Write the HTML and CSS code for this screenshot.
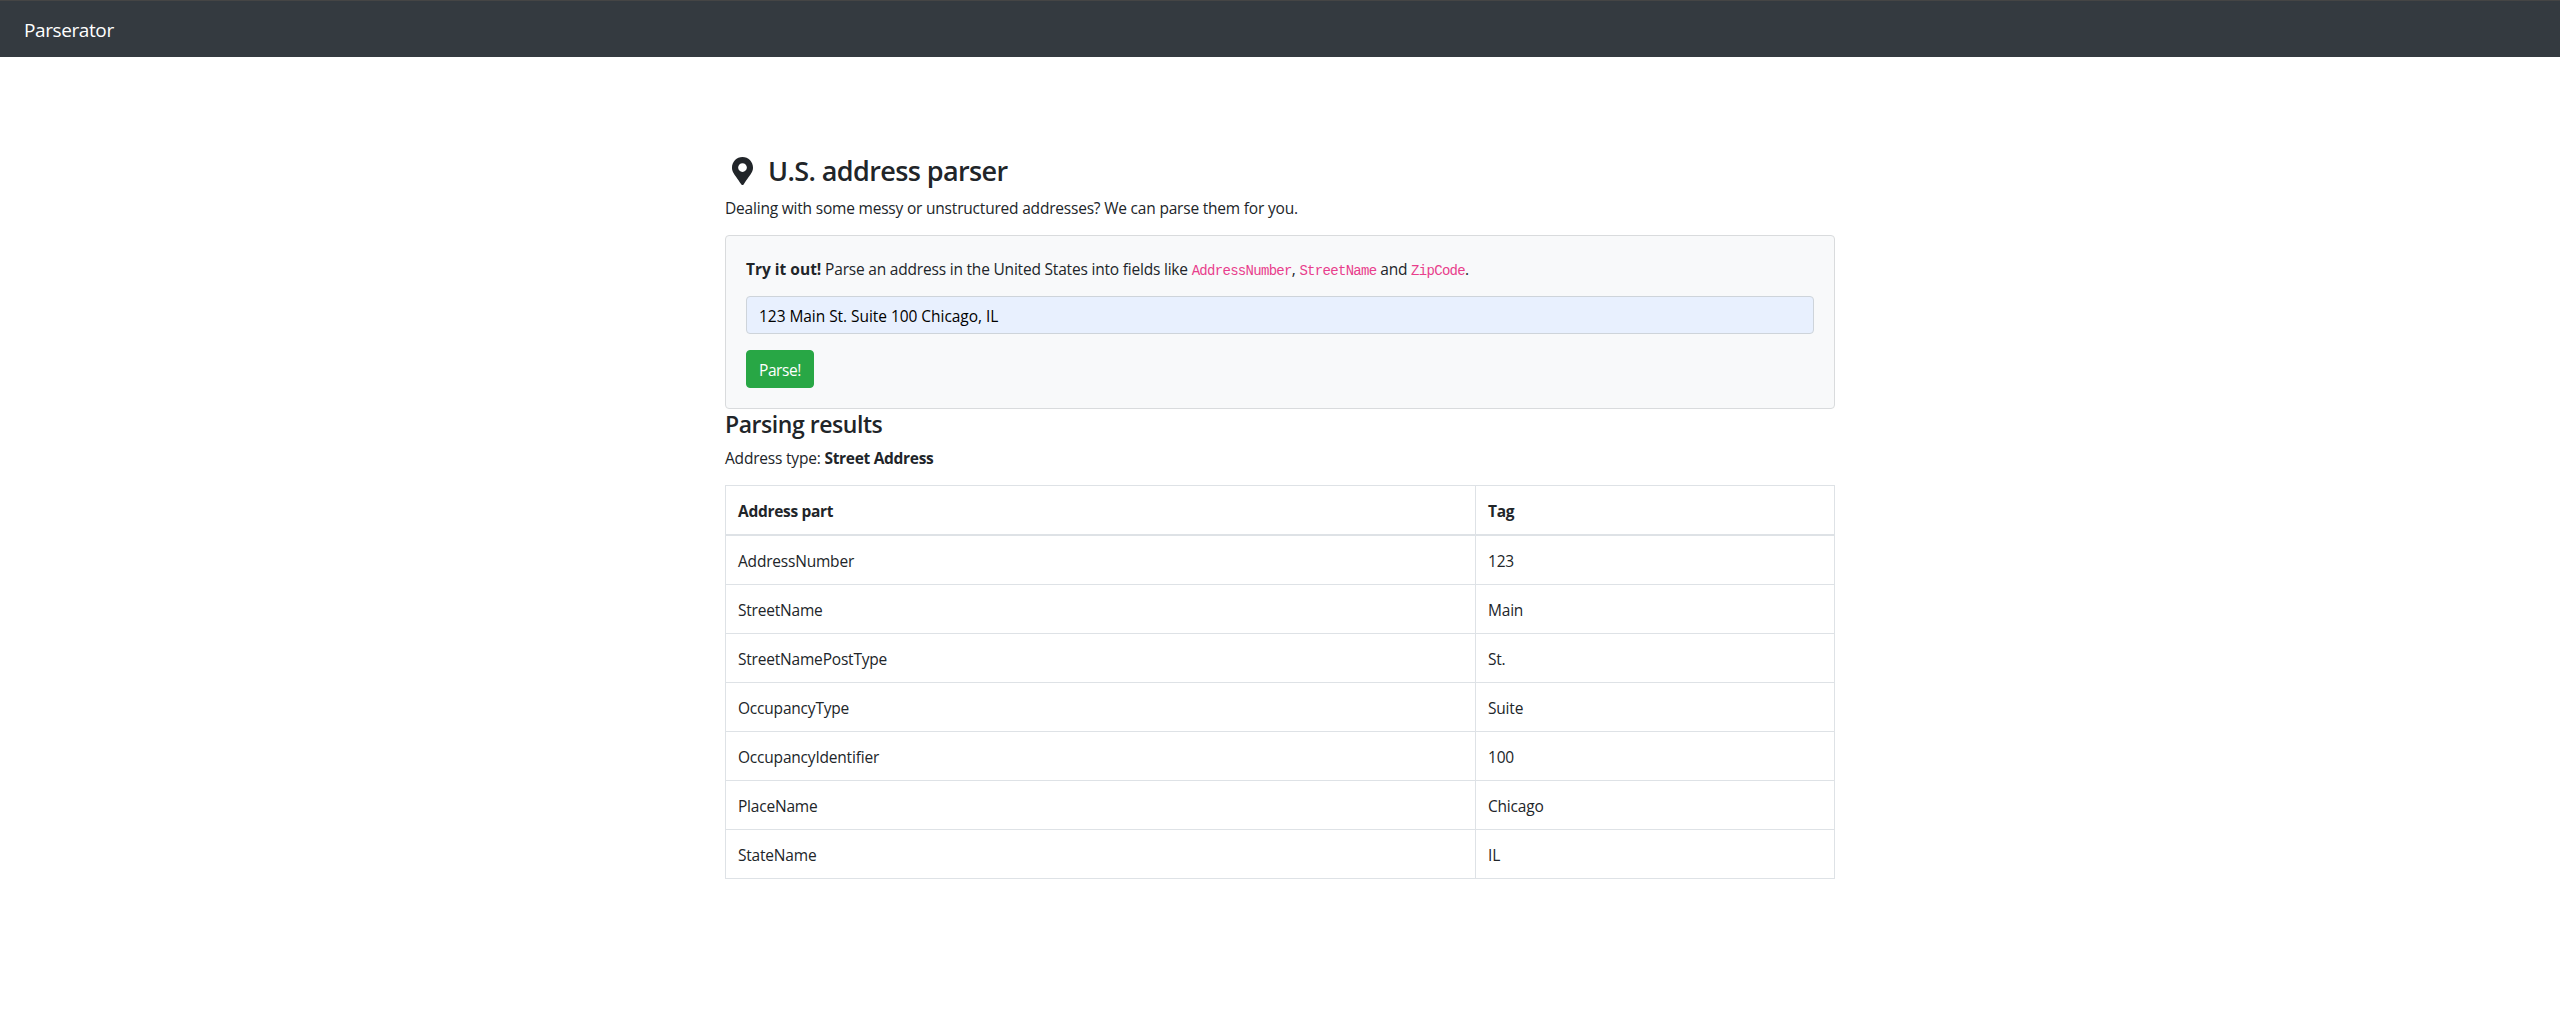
FILE: index.html
```html
<!DOCTYPE html>
<html lang="en">
<head>
  <meta charset="utf-8">
  <title>Parserator</title>
  <link rel="stylesheet" href="styles.css">
</head>
<body>
  <nav class="navbar"><a class="navbar-brand">Parserator</a></nav>
  <main class="container">
    <h3 class="title">
      <svg class="title-icon" viewBox="0 0 384 512" aria-hidden="true"><path fill="currentColor" d="M172.268 501.67C26.97 291.031 0 269.413 0 192 0 85.961 85.961 0 192 0s192 85.961 192 192c0 77.413-26.97 99.031-172.268 309.67-9.535 13.774-29.93 13.773-39.464 0zM192 272c44.183 0 80-35.817 80-80s-35.817-80-80-80-80 35.817-80 80 35.817 80 80 80z"/></svg>
      <span class="title-text">U.S. address parser</span>
    </h3>
    <p class="lead">Dealing with some messy or unstructured addresses? We can parse them for you.</p>
    <form class="card">
      <p class="hint"><strong class="try">Try it out!</strong> Parse an address in the United States into fields like <code>AddressNumber</code>, <code>StreetName</code> and <code>ZipCode</code>.</p>
      <input class="form-control" type="text" value="123 Main St. Suite 100 Chicago, IL">
      <button class="btn" type="button">Parse!</button>
    </form>
    <section class="results">
      <h4 class="subtitle">Parsing results</h4>
      <p class="address-type">Address type: <strong>Street Address</strong></p>
      <table class="table">
        <thead><tr><th class="col-part">Address part</th><th>Tag</th></tr></thead>
        <tbody>
          <tr><td>AddressNumber</td><td>123</td></tr>
          <tr><td>StreetName</td><td>Main</td></tr>
          <tr><td>StreetNamePostType</td><td>St.</td></tr>
          <tr><td>OccupancyType</td><td>Suite</td></tr>
          <tr><td>OccupancyIdentifier</td><td>100</td></tr>
          <tr><td>PlaceName</td><td>Chicago</td></tr>
          <tr><td>StateName</td><td>IL</td></tr>
        </tbody>
      </table>
    </section>
  </main>
</body>
</html>
```
FILE: styles.css
```css
*, *::before, *::after { box-sizing: border-box; }
body {
  margin: 0;
  background: #fff;
  color: #212529;
  font: 400 15.5px/24px "Open Sans", "Noto Sans", sans-serif;
  letter-spacing: -0.2px;
}
h3, h4, p { margin: 0; }
strong, th { font-weight: 700; letter-spacing: -0.3px; }
.try { letter-spacing: 0; }
.navbar {
  display: flex;
  align-items: center;
  height: 57px;
  padding: 1px 24px 0;
  border-top: 1px solid #454545;
  background: #343a40;
}
.navbar-brand { color: #fff; font-size: 19px; line-height: 30px; letter-spacing: -0.4px; }
.container { width: 1110px; margin: 97px auto 0; }
.title {
  display: flex;
  align-items: center;
  gap: 8px;
  height: 34px;
  margin-bottom: 8px;
  font-size: 27px;
  font-weight: 600;
  line-height: 34px;
  letter-spacing: -0.6px;
}
.title-icon { width: 35px; height: 28px; padding: 0 7px; }
.lead { margin-bottom: 15px; }
.card {
  display: flex;
  flex-direction: column;
  align-items: flex-start;
  gap: 16px;
  padding: 20px;
  border: 1px solid #d9dbdd;
  border-radius: 4px;
  background: #f8f9fa;
}
.hint { padding-top: 1px; margin-bottom: -1px; }
code { color: #e83e8c; font: 14px/1 "Liberation Mono", monospace; letter-spacing: -0.7px; }
.form-control {
  width: 100%;
  height: 38px;
  padding: 7px 12px 5px;
  border: 1px solid #ced4da;
  border-radius: 4px;
  background: #e8f0fe;
  color: #000;
  font: inherit;
  letter-spacing: -0.05px;
}
.btn {
  width: 68px;
  height: 38px;
  padding: 7px 0 5px;
  border: 1px solid #28a745;
  border-radius: 4px;
  background: #28a745;
  color: #fff;
  font: inherit;
  letter-spacing: -0.4px;
}
.subtitle { padding-top: 1px; margin-bottom: 7px; font-size: 23px; font-weight: 600; line-height: 28.8px; letter-spacing: -0.45px; }
.address-type { margin-bottom: 15.2px; }
.table { width: 100%; table-layout: fixed; border-collapse: collapse; }
.table th, .table td { padding: 13px 12px 11px; border: 1px solid #dee2e6; text-align: left; }
.table th { border-bottom-width: 2px; }
.col-part { width: 750px; }
```
